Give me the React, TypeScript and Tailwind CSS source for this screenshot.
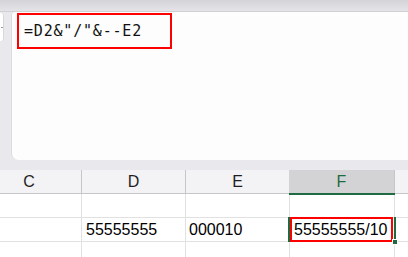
import React from "react";

export default function App() {
  const sans = { fontFamily: '"Liberation Sans", Arial, sans-serif' };
  return (
    <div className="w-[408px] h-[257px] overflow-hidden bg-[#e9e9ed] flex flex-col" style={sans}>
      {/* top bar */}
      <div className="h-[12px] shrink-0 bg-gradient-to-b from-[#d4d4d8] to-[#e4e4e8] border-b border-[#d0d0d4]" />
      {/* formula area */}
      <div className="h-[148px] shrink-0 flex">
        <div className="w-[11px] shrink-0 pt-[1px]">
          <div className="w-[4px] h-[28px] bg-white rounded-r-[3px] border-r border-[#d8d8dc] flex items-center justify-end">
            <div className="w-[2px] h-[1px] bg-[#9a9a9a]" />
          </div>
        </div>
        <div className="flex-1 bg-[#fcfdfc] rounded-tl-[4px] rounded-bl-[7px] border-l border-[#dcdce0] pt-[1px] pl-[5px]">
          <div
            className="w-[155px] h-[36px] border-[2px] border-[#ff0000] flex items-center pl-[5px] text-[15px] tracking-[0.8px] text-[#111]"
            style={{ fontFamily: '"DejaVu Sans Mono", monospace' }}
          >
            =D2&amp;"/"&amp;--E2
          </div>
        </div>
      </div>
      {/* gap */}
      <div className="h-[10px] shrink-0" />
      {/* header row */}
      <div className="h-[24px] shrink-0 grid grid-cols-[82px_104px_104px_105px_1fr] bg-[#f3f2f5] border-b border-[#c6c6c8] text-[16px] text-[#1f1f1f]">
        <div className="border-r border-[#c6c6c8] flex items-center justify-center pr-[23px]">C</div>
        <div className="border-r border-[#c6c6c8] flex items-center justify-center">D</div>
        <div className="border-r border-[#c6c6c8] flex items-center justify-center">E</div>
        <div className="relative border-r border-[#c6c6c8] bg-[#d3d3d5] flex items-center justify-center text-[#1e6b41] -ml-[1px]">
          F
          <div className="absolute left-0 right-[-1px] bottom-[-1px] h-[2px] bg-[#1e6b41]" />
        </div>
        <div />
      </div>
      {/* row 1 */}
      <div className="h-[24px] shrink-0 grid grid-cols-[82px_104px_104px_105px_1fr] bg-white border-b border-[#e1e1e1]">
        <div className="border-r border-[#e1e1e1]" />
        <div className="border-r border-[#e1e1e1]" />
        <div className="border-r border-[#e1e1e1]" />
        <div className="border-r border-[#e1e1e1]" />
        <div />
      </div>
      {/* row 2 */}
      <div className="h-[24px] shrink-0 grid grid-cols-[82px_104px_104px_105px_1fr] bg-white border-b border-[#e1e1e1] text-[16px] text-black">
        <div className="border-r border-[#e1e1e1]" />
        <div className="border-r border-[#e1e1e1] flex items-center pl-[4px]">55555555</div>
        <div className="border-r border-[#e1e1e1] flex items-center pl-[3px]">000010</div>
        <div className="relative border-r border-[#e1e1e1]">
          <div className="absolute left-[-2px] top-[-1px] w-[2px] h-[25px] bg-[#1e6b41]" />
          <div className="absolute right-[-2px] top-[-1px] w-[2px] h-[23px] bg-[#1e6b41]" />
          <div className="absolute left-0 top-[-1px] w-[103px] h-[25px] border-[2px] border-[#ff0000] flex items-center pl-[2px]">
            55555555/10
          </div>
          <div className="absolute right-[-4px] bottom-[-3px] w-[6px] h-[6px] bg-[#1e6b41] border border-white" />
        </div>
        <div />
      </div>
      {/* row 3 */}
      <div className="flex-1 grid grid-cols-[82px_104px_104px_105px_1fr] bg-white">
        <div className="border-r border-[#e1e1e1]" />
        <div className="border-r border-[#e1e1e1]" />
        <div className="border-r border-[#e1e1e1]" />
        <div className="border-r border-[#e1e1e1]" />
        <div />
      </div>
    </div>
  );
}
